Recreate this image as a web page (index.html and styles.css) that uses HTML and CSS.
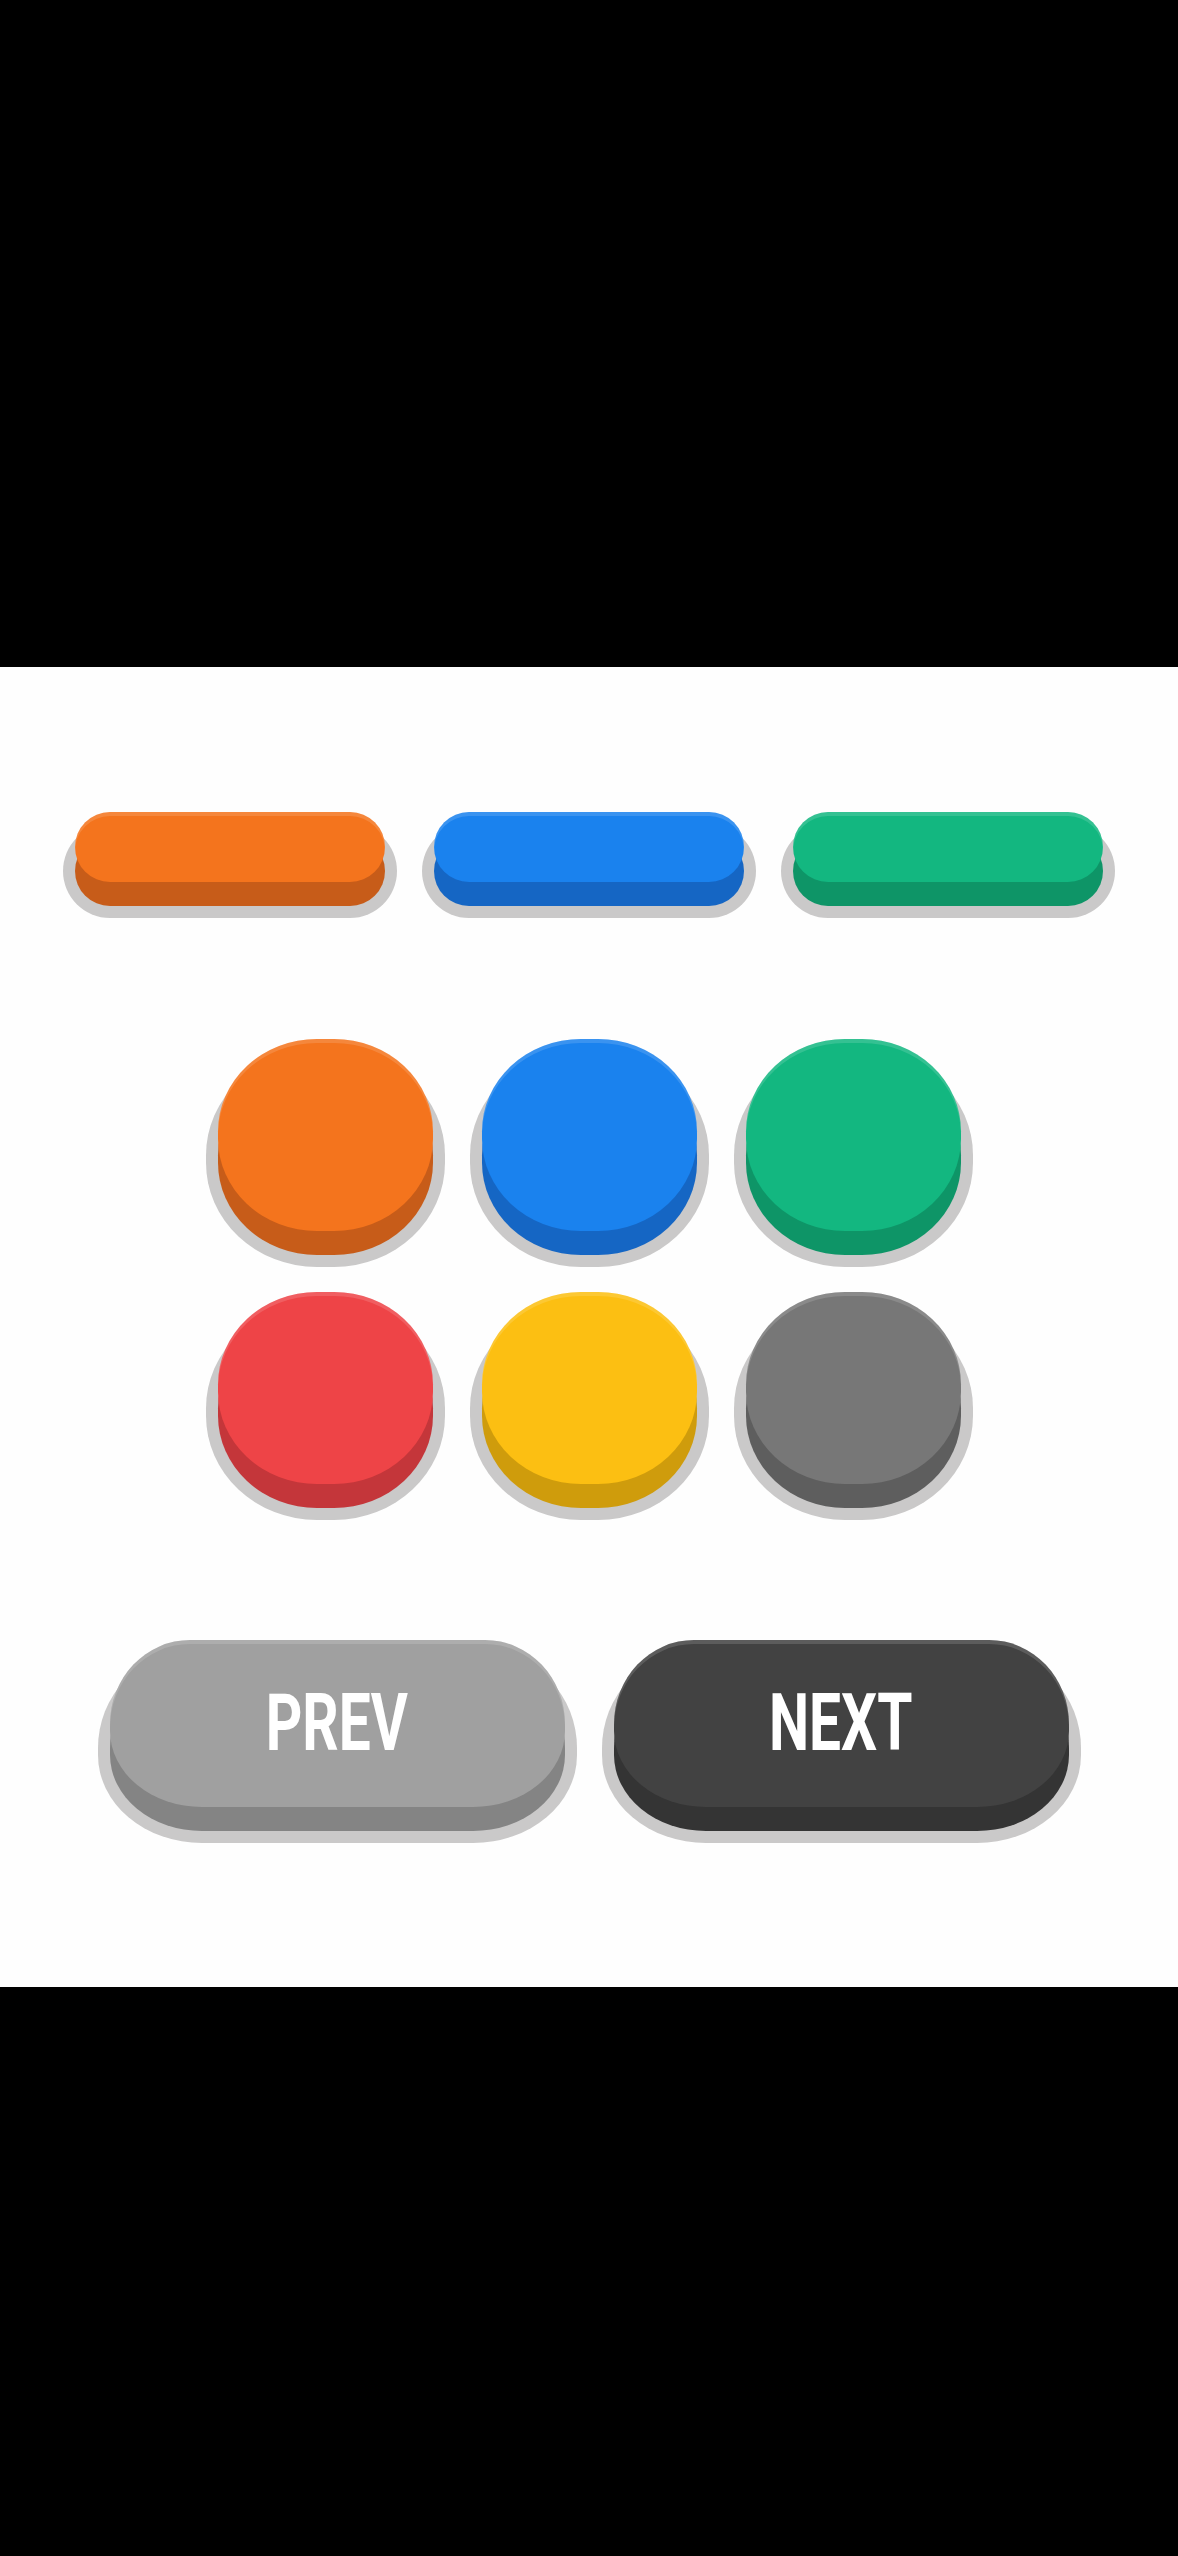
FILE: index.html
```html
<!DOCTYPE html>
<html lang="en">
<head>
<meta charset="utf-8">
<title>Buttons</title>
<link rel="stylesheet" href="styles.css">
</head>
<body>
  <div class="band band-top"></div>
  <main class="stage">
    <div class="row pills">
      <div class="btn pill orange"></div>
      <div class="btn pill blue"></div>
      <div class="btn pill green"></div>
    </div>
    <div class="grid rounds">
      <div class="btn round orange"></div>
      <div class="btn round blue"></div>
      <div class="btn round green"></div>
      <div class="btn round red"></div>
      <div class="btn round yellow"></div>
      <div class="btn round gray"></div>
    </div>
    <div class="row navs">
      <div class="btn nav light"><span class="label">PREV</span></div>
      <div class="btn nav dark"><span class="label">NEXT</span></div>
    </div>
  </main>
  <div class="band band-bottom"></div>
</body>
</html>
```

FILE: styles.css
```css
html, body {
  margin: 0;
  padding: 0;
  background: #000;
}

.band-top { height: 667px; background: #000; }
.band-bottom { height: 569px; background: #000; }

.stage {
  height: 1320px;
  box-sizing: border-box;
  background: #fefefe;
  padding-top: 145px;
  display: flex;
  flex-direction: column;
  align-items: center;
}

.row {
  display: flex;
  justify-content: center;
  gap: 49px;
}

.grid {
  display: grid;
  grid-template-columns: repeat(3, 215px);
  column-gap: 49px;
  row-gap: 61px;
  margin-top: 157px;
}

.navs { margin-top: 156px; }

.btn {
  --face: #888;
  --side: #666;
  background: var(--face);
  box-shadow:
    inset 0 4px 0 rgba(255, 255, 255, 0.14),
    0 24px 0 0 var(--side),
    0 24px 0 12px #cac9c9;
}

.pill {
  width: 310px;
  height: 70px;
  border-radius: 35px;
}

.round {
  width: 215px;
  height: 192px;
  border-radius: 46% / 48%;
}

.nav {
  width: 455px;
  height: 167px;
  border-radius: 80px 80px 92px 92px / 84px 84px 76px 76px;
  display: flex;
  align-items: center;
  justify-content: center;
}

.label {
  display: inline-block;
  font-family: Roboto, "Liberation Sans", sans-serif;
  font-weight: 700;
  font-size: 79px;
  line-height: 1;
  color: #ffffff;
  transform: scaleX(0.72);
  letter-spacing: 0;
}

.orange { --face: #f4741d; --side: #c75c19; }
.blue   { --face: #1a82ee; --side: #1566c4; }
.green  { --face: #13b780; --side: #0e9567; }
.red    { --face: #ee4447; --side: #c4363a; }
.yellow { --face: #fcbf12; --side: #cf9c0c; }
.gray   { --face: #777777; --side: #5e5e5e; }
.light  { --face: #a0a0a0; --side: #848484; }
.dark   { --face: #424242; --side: #343434; }
```
